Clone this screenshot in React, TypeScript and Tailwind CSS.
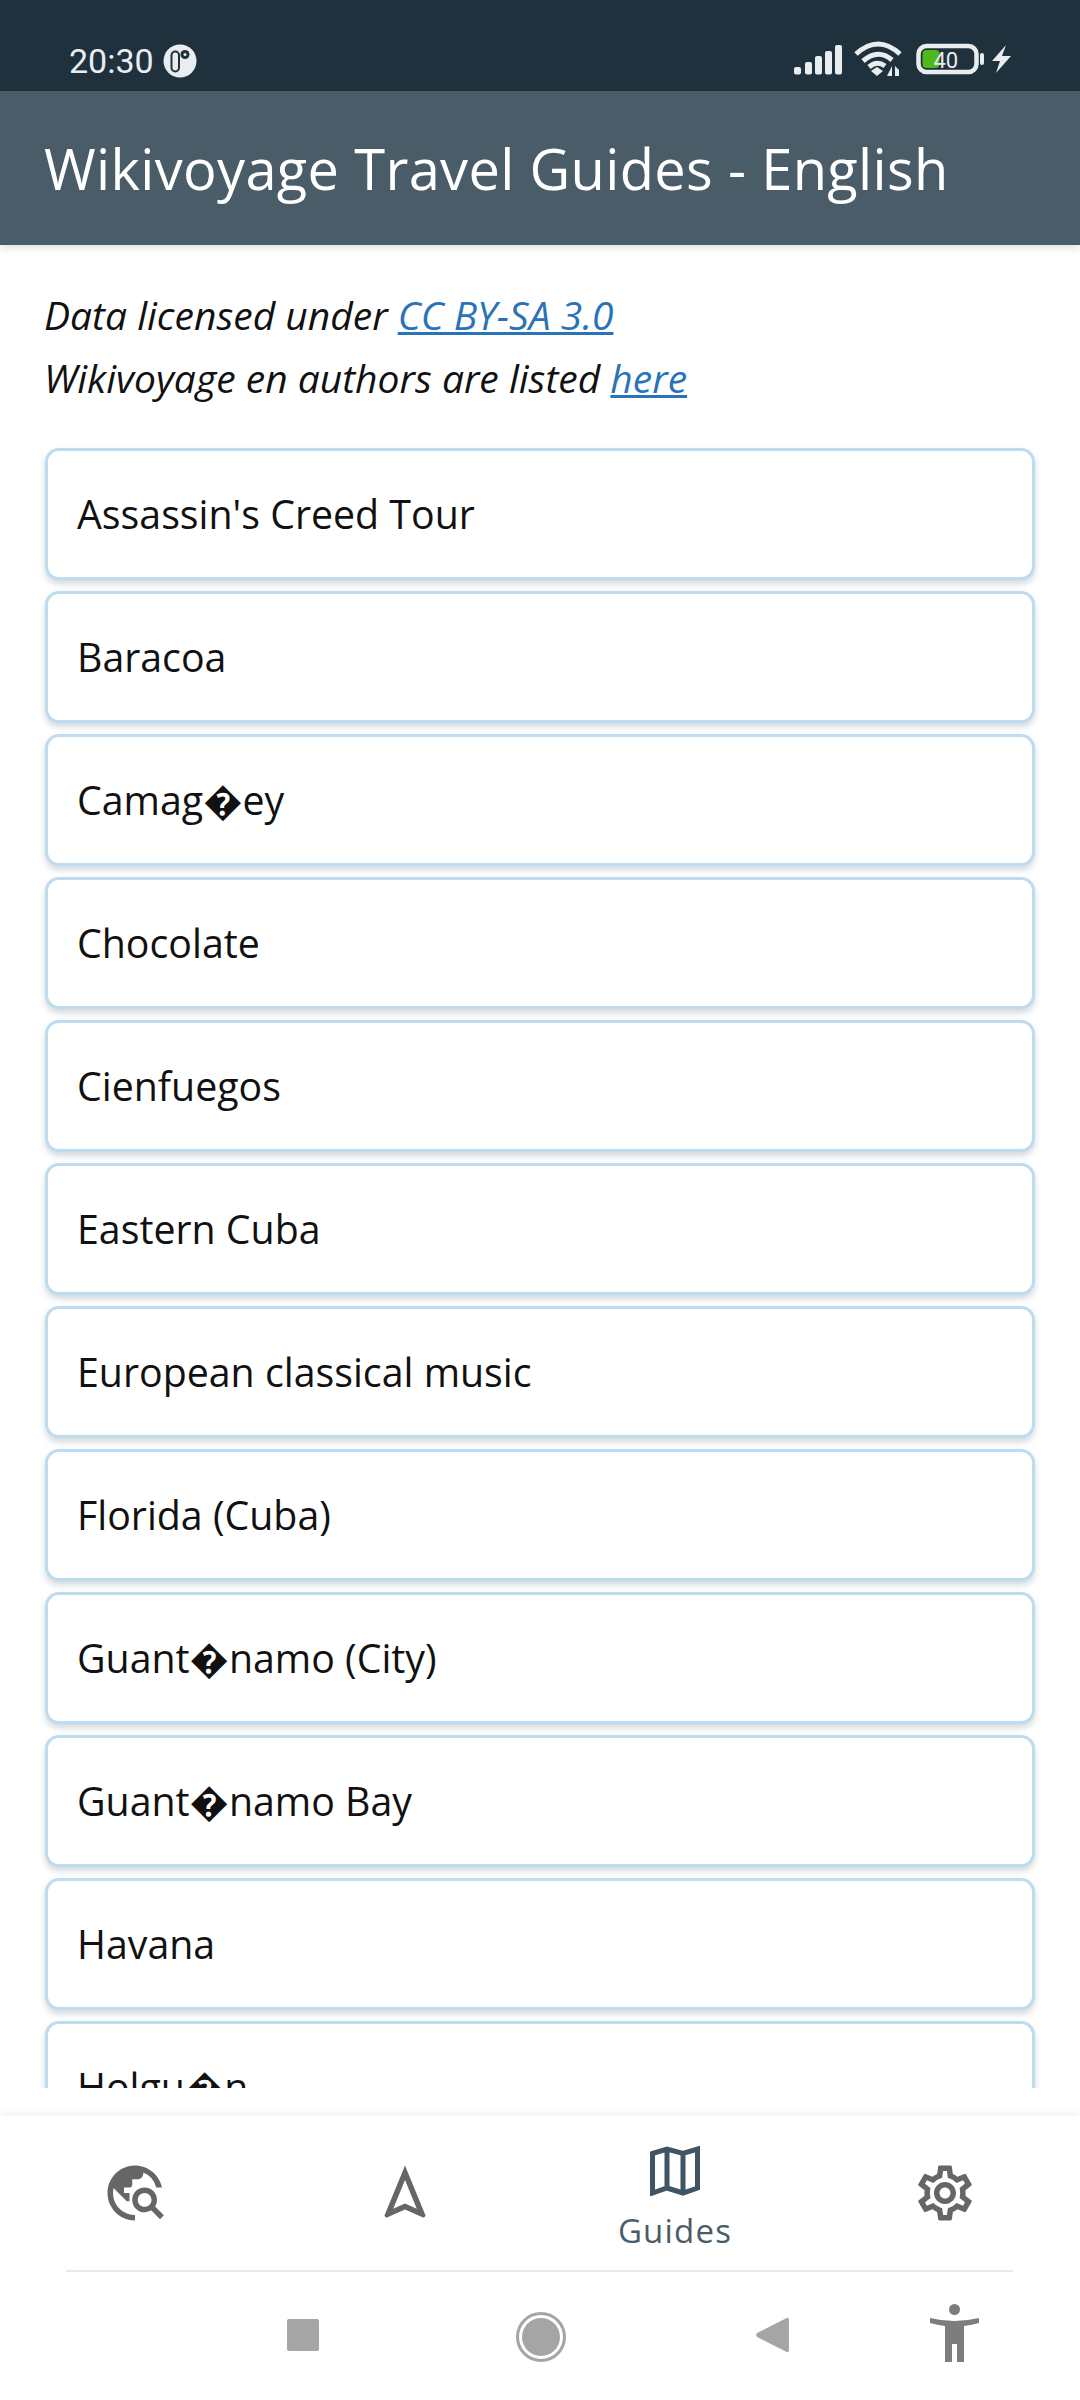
import { MdTravelExplore, MdOutlineNavigation, MdOutlineSettings } from "react-icons/md";

const items = [
  "Assassin's Creed Tour",
  "Baracoa",
  "Camag\uFFFDey",
  "Chocolate",
  "Cienfuegos",
  "Eastern Cuba",
  "European classical music",
  "Florida (Cuba)",
  "Guant\uFFFDnamo (City)",
  "Guant\uFFFDnamo Bay",
  "Havana",
  "Holgu\uFFFDn",
];

function StatusIcons() {
  return (
    <svg width="230" height="40" viewBox="790 40 230 40" className="block">
      <g fill="#e9edf0">
        <rect x="794" y="67" width="7" height="7.5" rx="2" />
        <rect x="805" y="62" width="7" height="12.5" rx="2" />
        <rect x="815" y="56" width="7" height="18.5" rx="2" />
        <rect x="825" y="51" width="7" height="23.5" rx="2" />
        <rect x="835" y="45" width="7" height="29.5" rx="2" />
      </g>
      <g fill="none" stroke="#e9edf0" strokeWidth="5">
        <path d="M856 54 Q878 34 900 54" />
        <path d="M863 61 Q878 48 892 60" />
        <path d="M869 67 Q877 60 885 66" />
      </g>
      <path d="M871 71 L877 67 L883 71 L877 76 Z" fill="#e9edf0" />
      <path d="M892 66 v10 h-5 Z M895 66 l4 4 v6 h-4 Z" fill="#e9edf0" />
      <rect x="918.5" y="46" width="58" height="26" rx="8" fill="none" stroke="#e9edf0" strokeWidth="4.5" />
      <rect x="922.5" y="50" width="17" height="18" rx="4" fill="#4fb81c" />
      <rect x="980" y="53" width="4" height="12" rx="2" fill="#e9edf0" />
      <text x="933.5" y="68" fontFamily="Roboto, sans-serif" fontSize="22" fill="#e9edf0">40</text>
      <path d="M1006 45 L992 61 L1000 61 L996 73 L1011 56 L1002 56 Z" fill="#e9edf0" />
    </svg>
  );
}

function LogoDot() {
  return (
    <svg width="34" height="34" viewBox="0 0 34 34" className="block">
      <circle cx="17" cy="17" r="16.5" fill="#e9edf0" />
      <rect x="7.5" y="6.5" width="9.5" height="22" rx="4.75" fill="#1f313c" />
      <rect x="9.5" y="8.5" width="5.5" height="18" rx="2.75" fill="#e9edf0" />
      <circle cx="22" cy="10.5" r="4.5" fill="#1f313c" />
      <circle cx="22" cy="10.5" r="1.5" fill="#e9edf0" />
    </svg>
  );
}

function MapIcon() {
  return (
    <svg width="50" height="50" viewBox="0 0 50 50" className="block">
      <path
        d="M2.5 7.5 L17 3 L33 7.5 L47.5 3 V42 L33 47 L17 42 L2.5 47 Z M17 3 V42 M33 7.5 V47"
        fill="none"
        stroke="#3f5566"
        strokeWidth="5"
      />
    </svg>
  );
}

function AccessIcon() {
  return (
    <svg width="49" height="58" viewBox="0 0 49 58" className="block" fill="#7d7d7d">
      <circle cx="24.5" cy="5.5" r="5.5" />
      <path d="M0 14 Q24 20 49 14 L49 19 Q42 21 34 22 V58 H27 V40 H22 V58 H15 V22 Q7 21 0 19 Z" />
    </svg>
  );
}

export default function App() {
  return (
    <div className="flex h-[2400px] w-[1080px] flex-col overflow-hidden bg-white font-['Open_Sans',sans-serif]">
      <div className="flex h-[91px] shrink-0 items-start justify-between bg-[#1f313c] pl-[69px] pr-[60px] pt-[42px]">
        <div className="flex items-center gap-[9px]">
          <span className="font-['Roboto',sans-serif] text-[34px] leading-[38px] text-[#e9edf0]">20:30</span>
          <LogoDot />
        </div>
        <div className="-mt-[2px]">
          <StatusIcons />
        </div>
      </div>
      <div className="z-10 flex h-[154px] shrink-0 items-center bg-[#4a5c68] pl-[44px] shadow-[0_3px_8px_rgba(0,0,0,0.12)]">
        <h1 className="text-[56px] font-normal tracking-[0.33px] text-white">Wikivoyage Travel Guides - English</h1>
      </div>
      <main className="h-[1843px] shrink-0 overflow-hidden px-[45px] pt-[38px]">
        <p className="-ml-[1px] text-[39px] italic leading-[63px] text-[#111111]">
          Data licensed under <a className="text-[#2b73b8] underline">CC BY-SA 3.0</a>
          <br />
          Wikivoyage en authors are listed <a className="text-[#2b73b8] underline">here</a>
        </p>
        <ul className="mt-[39px] flex flex-col gap-[11px]">
          {items.map((t) => (
            <li
              key={t}
              className="flex h-[132px] shrink-0 items-center rounded-[14px] border-[3px] border-[#bfdcee] bg-white pl-[29px] pt-[1px] text-[39.3px] text-[#111111] shadow-[0_4px_6px_rgba(60,80,100,0.22)]"
            >
              {t}
            </li>
          ))}
        </ul>
      </main>
      <div className="h-[28px] shrink-0 bg-white" />
      <nav className="z-10 flex-1 bg-white shadow-[0_-3px_8px_rgba(0,0,0,0.06)]">
        <div className="mx-auto grid h-[154px] grid-cols-4">
          <div className="flex items-center justify-center text-[#666666]">
            <MdTravelExplore size={66} />
          </div>
          <div className="flex items-center justify-center text-[#666666]">
            <MdOutlineNavigation size={66} />
          </div>
          <div className="flex flex-col items-center pt-[30px]">
            <MapIcon />
            <span className="mt-[14px] text-[33px] leading-[42px] tracking-[1.2px] text-[#4a5c68]">Guides</span>
          </div>
          <div className="flex items-center justify-center text-[#666666]">
            <MdOutlineSettings size={66} />
          </div>
        </div>
        <div className="ml-[66px] h-[2px] w-[947px] bg-[#e8e8e8]" />
        <div className="relative flex h-[128px] items-start pt-[47px]">
          <div className="ml-[287px] h-[32px] w-[32px] rounded-[2px] bg-[#a5a5a5]" />
          <div className="-mt-[7px] ml-[197px] flex h-[50px] w-[50px] items-center justify-center rounded-full border-[3px] border-[#a5a5a5]">
            <div className="h-[38px] w-[38px] rounded-full bg-[#a5a5a5]" />
          </div>
          <svg width="35" height="38" viewBox="0 0 32 38" preserveAspectRatio="none" className="ml-[189px] -mt-[3px] block">
            <path d="M29 2 Q31 1 31 4 V34 Q31 37 29 36 L2 21 Q0 19 2 17 Z" fill="#a5a5a5" />
          </svg>
          <div className="-mt-[15px] ml-[140px]">
            <AccessIcon />
          </div>
        </div>
      </nav>
    </div>
  );
}
